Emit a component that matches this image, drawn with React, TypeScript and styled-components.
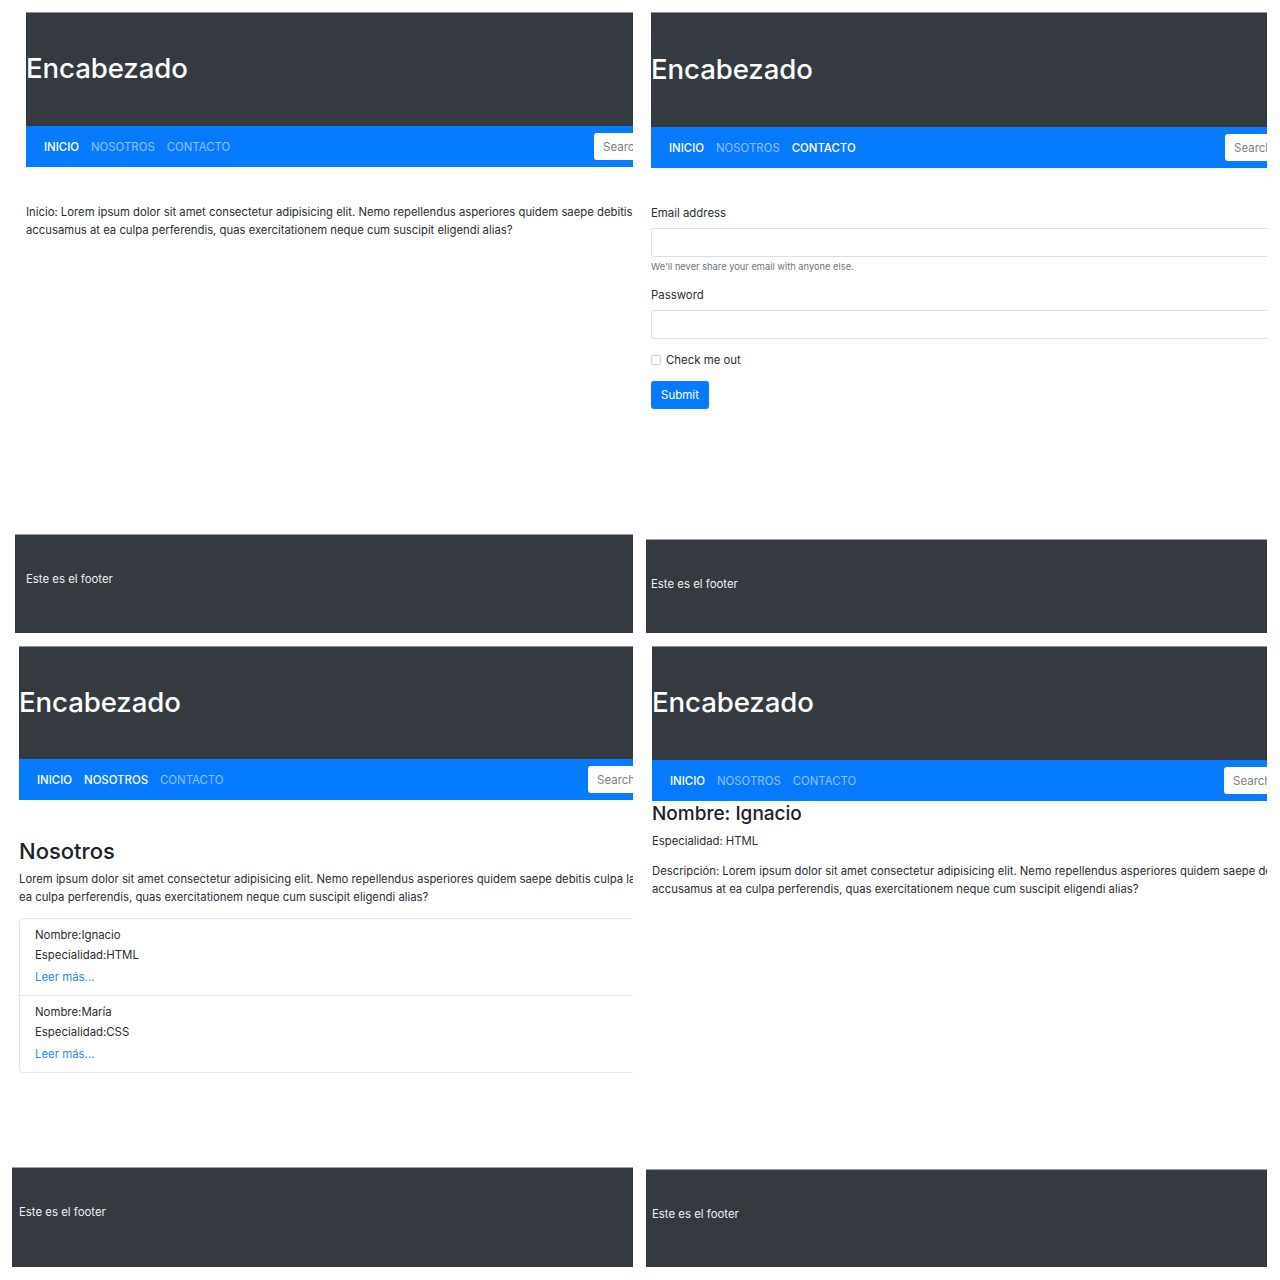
import React from "react";
import styled, { createGlobalStyle } from "styled-components";

const Global = createGlobalStyle`
  html, body { margin: 0; padding: 0; background: #ffffff; }
  body { font-family: Inter, "Liberation Sans", Arial, sans-serif; color: #212529; }
  * { box-sizing: border-box; }
`;

const Collage = styled.div`
  display: grid;
  grid-template-columns: 640px 640px;
  grid-template-rows: 640px 640px;
  width: 1280px;
  height: 1280px;
  background: #ffffff;
`;

const Shot = styled.section<{ $top: number; $right: number; $bottom: number; $left: number }>`
  display: flex;
  flex-direction: column;
  height: 640px;
  padding: ${(p) => `${p.$top}px ${p.$right}px ${p.$bottom}px ${p.$left}px`};
  overflow: hidden;
`;

const Page = styled.div<{ $inset: number }>`
  display: flex;
  flex-direction: column;
  margin-left: ${(p) => p.$inset}px;
  overflow: hidden;
`;

const Header = styled.header<{ $h: number }>`
  display: flex;
  align-items: center;
  height: ${(p) => p.$h}px;
  padding-bottom: 3px;
  background: #343a40;
  border-top: 1px solid #8d9196;
`;

const Title = styled.h1`
  margin: 0;
  font-family: Inter, "Liberation Sans", sans-serif;
  font-size: 27.6px;
  font-weight: 500;
  color: #ffffff;
  letter-spacing: -0.1px;
`;

const Nav = styled.nav`
  display: flex;
  align-items: center;
  height: 41px;
  padding-left: 18px;
  background: #077bfd;
  overflow: hidden;
`;

const NavLinks = styled.div`
  display: flex;
  gap: 12px;
`;

const NavLink = styled.a<{ $active?: boolean }>`
  font-size: 11.4px;
  font-weight: ${(p) => (p.$active ? 500 : 400)};
  color: ${(p) => (p.$active ? "#ffffff" : "rgba(255,255,255,0.55)")};
  text-decoration: none;
  white-space: nowrap;
`;

const SearchClip = styled.div<{ $w: number }>`
  margin-left: auto;
  width: ${(p) => p.$w}px;
  flex: none;
  overflow: hidden;
`;

const SearchInput = styled.input`
  display: block;
  width: 180px;
  height: 27px;
  padding: 0 9px;
  border: none;
  border-radius: 3px;
  background: #ffffff;
  font-family: Inter, "Liberation Sans", sans-serif;
  font-size: 11.5px;
  &::placeholder { color: #7b8187; }
`;

const Content = styled.div<{ $mt: number }>`
  display: flex;
  flex-direction: column;
  margin-top: ${(p) => p.$mt}px;
`;

const Para = styled.p<{ $mt?: number }>`
  margin: ${(p) => p.$mt ?? 0}px 0 0;
  font-size: 11.3px;
  line-height: 18px;
  color: #2a2d31;
`;

const Line = styled.span`
  display: block;
  white-space: nowrap;
`;

const FieldLabel = styled.div<{ $mt?: number }>`
  margin-top: ${(p) => p.$mt ?? 0}px;
  font-size: 11.4px;
  line-height: 18px;
  color: #2a2d31;
`;

const TextField = styled.input`
  display: block;
  width: 700px;
  height: 29px;
  margin-top: 6px;
  border: 1px solid #dcdfe3;
  border-radius: 3px;
  background: #fff;
`;

const Help = styled.small`
  display: block;
  margin-top: 3px;
  font-size: 9.3px;
  line-height: 14px;
  color: #6c757d;
`;

const CheckRow = styled.div`
  display: flex;
  align-items: center;
  gap: 5px;
  margin-top: 12px;
  height: 18px;
  font-size: 11.4px;
  color: #2a2d31;
`;

const CheckBox = styled.input`
  appearance: none;
  margin: 0;
  width: 10px;
  height: 10px;
  border: 1px solid #cfd2d6;
  border-radius: 2px;
  background: #fff;
`;

const SubmitButton = styled.button`
  align-self: flex-start;
  margin-top: 12px;
  width: 58px;
  height: 28px;
  padding: 0;
  border: none;
  border-radius: 3px;
  background: #077bfd;
  color: #ffffff;
  font-family: Inter, "Liberation Sans", sans-serif;
  font-size: 11.5px;
`;

const H2 = styled.h2`
  margin: 0;
  font-size: 22px;
  font-weight: 500;
  line-height: 28px;
  color: #1d2024;
`;

const H3 = styled.h3`
  margin: 0;
  font-size: 19px;
  font-weight: 500;
  line-height: 26px;
  color: #1d2024;
`;

const CardList = styled.ul`
  list-style: none;
  margin: 12px 0 0;
  padding: 0;
  width: 700px;
  border: 1px solid #e6e7e9;
  border-radius: 4px;
`;

const CardItem = styled.li`
  display: flex;
  flex-direction: column;
  padding: 6px 15px 8px;
  & + & { border-top: 1px solid #e6e7e9; }
`;

const ItemText = styled.span`
  font-size: 11.4px;
  line-height: 20px;
  color: #2a2d31;
`;

const ReadMore = styled.a`
  margin-top: 2px;
  font-size: 11.4px;
  line-height: 20px;
  color: #2b8be6;
  text-decoration: none;
`;

const Footer = styled.footer<{ $h: number; $pad: number }>`
  display: flex;
  align-items: flex-start;
  margin-top: auto;
  height: ${(p) => p.$h}px;
  padding: 35px 0 0 ${(p) => p.$pad}px;
  background: #343a40;
  border-top: 1px solid #9aa0a6;
  color: #eef0f2;
  font-size: 11.4px;
  line-height: 18px;
`;

type Active = "inicio" | "nosotros" | "contacto" | "none";

function NavBar({ active, search }: { active: Active; search: number }) {
  return (
    <Nav>
      <NavLinks>
        <NavLink $active>INICIO</NavLink>
        <NavLink $active={active === "nosotros"}>NOSOTROS</NavLink>
        <NavLink $active={active === "contacto"}>CONTACTO</NavLink>
      </NavLinks>
      <SearchClip $w={search}>
        <SearchInput placeholder="Search" aria-label="Search" />
      </SearchClip>
    </Nav>
  );
}

export default function App() {
  return (
    <>
      <Global />
      <Collage>
        {/* Inicio */}
        <Shot $top={12} $right={7} $bottom={7} $left={15}>
          <Page $inset={11}>
            <Header $h={114}>
              <Title>Encabezado</Title>
            </Header>
            <NavBar active="inicio" search={39} />
            <Content $mt={36}>
              <Para>
                <Line>
                  Inicio: Lorem ipsum dolor sit amet consectetur adipisicing elit. Nemo repellendus asperiores quidem saepe debitis culpa laudantium
                </Line>
                <Line>accusamus at ea culpa perferendis, quas exercitationem neque cum suscipit eligendi alias?</Line>
              </Para>
            </Content>
          </Page>
          <Footer $h={99} $pad={11}>Este es el footer</Footer>
        </Shot>

        {/* Contacto */}
        <Shot $top={12} $right={13} $bottom={7} $left={6}>
          <Page $inset={5}>
            <Header $h={115}>
              <Title>Encabezado</Title>
            </Header>
            <NavBar active="contacto" search={42} />
            <Content $mt={36}>
              <FieldLabel>Email address</FieldLabel>
              <TextField type="email" aria-label="Email address" />
              <Help>We'll never share your email with anyone else.</Help>
              <FieldLabel $mt={12}>Password</FieldLabel>
              <TextField type="password" aria-label="Password" />
              <CheckRow>
                <CheckBox type="checkbox" aria-label="Check me out" />
                <span>Check me out</span>
              </CheckRow>
              <SubmitButton>Submit</SubmitButton>
            </Content>
          </Page>
          <Footer $h={94} $pad={5}>Este es el footer</Footer>
        </Shot>

        {/* Nosotros */}
        <Shot $top={6} $right={7} $bottom={13} $left={12}>
          <Page $inset={7}>
            <Header $h={113}>
              <Title>Encabezado</Title>
            </Header>
            <NavBar active="nosotros" search={45} />
            <Content $mt={37}>
              <H2>Nosotros</H2>
              <Para $mt={5}>
                <Line>
                  Lorem ipsum dolor sit amet consectetur adipisicing elit. Nemo repellendus asperiores quidem saepe debitis culpa laudantium accusamus at
                </Line>
                <Line>ea culpa perferendis, quas exercitationem neque cum suscipit eligendi alias?</Line>
              </Para>
              <CardList>
                <CardItem>
                  <ItemText>Nombre:Ignacio</ItemText>
                  <ItemText>Especialidad:HTML</ItemText>
                  <ReadMore>Leer más...</ReadMore>
                </CardItem>
                <CardItem>
                  <ItemText>Nombre:María</ItemText>
                  <ItemText>Especialidad:CSS</ItemText>
                  <ReadMore>Leer más...</ReadMore>
                </CardItem>
              </CardList>
            </Content>
          </Page>
          <Footer $h={100} $pad={7}>Este es el footer</Footer>
        </Shot>

        {/* Detalle */}
        <Shot $top={6} $right={13} $bottom={13} $left={6}>
          <Page $inset={6}>
            <Header $h={114}>
              <Title>Encabezado</Title>
            </Header>
            <NavBar active="none" search={43} />
            <Content $mt={0}>
              <H3>Nombre: Ignacio</H3>
              <Para $mt={5}>
                <Line>Especialidad: HTML</Line>
              </Para>
              <Para $mt={12}>
                <Line>
                  Descripción: Lorem ipsum dolor sit amet consectetur adipisicing elit. Nemo repellendus asperiores quidem saepe debitis culpa laudantium
                </Line>
                <Line>accusamus at ea culpa perferendis, quas exercitationem neque cum suscipit eligendi alias?</Line>
              </Para>
            </Content>
          </Page>
          <Footer $h={98} $pad={6}>Este es el footer</Footer>
        </Shot>
      </Collage>
    </>
  );
}
